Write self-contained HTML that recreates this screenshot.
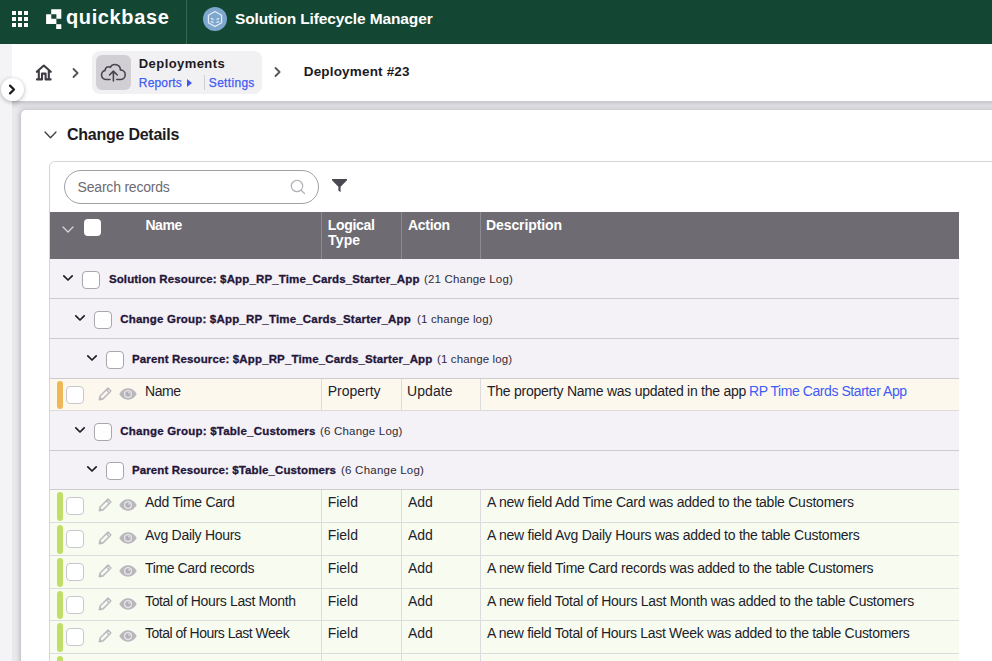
<!DOCTYPE html>
<html lang="en">
<head>
<meta charset="utf-8">
<title>Deployment #23 - Solution Lifecycle Manager</title>
<style>
*{box-sizing:border-box;margin:0;padding:0}
html,body{width:992px;height:661px;overflow:hidden}
body{position:relative;background:#e9e8eb;font-family:"Liberation Sans",sans-serif;color:#1c1b1f;font-size:14px;-webkit-font-smoothing:antialiased}
.abs{position:absolute}
.t{position:absolute;white-space:nowrap;line-height:1}
/* top bar */
#topbar{left:0;top:0;width:992px;height:44px;background:#144733}
#topdiv{left:186px;top:0;width:1px;height:44px;background:#3c6654}
/* sidebar strip */
#side{left:0;top:44px;width:12px;height:617px;background:#f4f3f6}
/* breadcrumb bar */
#crumb{left:12px;top:44px;width:980px;height:57px;background:#fff}
#crumbsh{left:12px;top:101px;width:980px;height:9px;background:linear-gradient(#c6c5c9,#dddce0 45%,#e9e8eb)}
#pill{left:92px;top:51px;width:170px;height:43px;background:#f1f0f3;border-radius:8px}
#ibox{left:96px;top:55px;width:35px;height:35px;background:#d1cfd4;border-radius:6px}
#expand{left:0.500px;top:78px;width:23px;height:23px;border-radius:50%;background:#fff;box-shadow:0 1px 4px rgba(0,0,0,.3)}
/* card */
#card{left:21px;top:110px;width:1000px;height:600px;background:#fff;border-radius:5px;box-shadow:-1px 0 5px rgba(50,48,58,.28)}
#inner{left:49px;top:161px;width:1000px;height:560px;background:#fff;border:1px solid #d6d5d9;border-radius:6px}
#search{left:64px;top:170px;width:255px;height:34px;border:1px solid #a19ea6;border-radius:17px;background:#fff}
/* table */
#thead{left:50px;top:212px;width:909px;height:47px;background:#6e6b73}
.vd{position:absolute;width:1px;background:#8d8a92}
.row{position:absolute;left:50px;width:909px}
.grp{background:#f4f2f7;border-bottom:1px solid #cdcbd1}
.dat{border-bottom:1px solid #dcdbdf}
.upd{background:#fcf8ee}
.add{background:#f8fcf0}
.cd{position:absolute;top:0;bottom:0;width:1px;background:#dcdbdf}
.cb{position:absolute;width:18px;height:18px;border:1px solid #a9a6ae;border-radius:4px;background:#fff}
.cbl{border-color:#c9c7cd}
.bar{position:absolute;left:6.500px;top:2px;width:6px;bottom:1px;border-radius:3px}
.g{font-weight:bold;font-size:11.500px;color:#24163a;-webkit-text-stroke:0.300px #24163a}
.gc{font-size:11.5px;color:#2f2a36}
.d{font-size:14px;color:#221d2b}
.h{font-size:14px;font-weight:bold;color:#fff}
.lnk{color:#3f5bf6}
#t_rep,#t_set{-webkit-text-stroke:0.250px #3f5bf6}
svg{position:absolute;overflow:visible}
</style>
</head>
<body>
<!-- top bar -->
<div class="abs" id="topbar"></div>
<div class="abs" id="topdiv"></div>
<svg id="gridic" style="left:12px;top:11px" width="16" height="16" viewBox="0 0 16 16" fill="#fff">
<rect x="0" y="0" width="4" height="4"/><rect x="6" y="0" width="4" height="4"/><rect x="12" y="0" width="4" height="4"/>
<rect x="0" y="6" width="4" height="4"/><rect x="6" y="6" width="4" height="4"/><rect x="12" y="6" width="4" height="4"/>
<rect x="0" y="12" width="4" height="4"/><rect x="6" y="12" width="4" height="4"/><rect x="12" y="12" width="4" height="4"/>
</svg>
<svg id="qblogo" style="left:46px;top:9px" width="16" height="20" viewBox="46 9 16 20" fill="#fff">
<path d="M51.200 9.200H61.300V18.800H56.400V14.200H51.200z"/><path d="M46.100 14.200H51.300V18.700H56.400V24H46.100z"/><rect x="56.200" y="24.200" width="5.100" height="4.800"/>
</svg>
<div class="t" id="t_qb" style="letter-spacing:0.625px;margin-left:-1.00px;left:67px;top:7px;font-size:20px;font-weight:bold;color:#fff">quickbase</div>
<svg id="appic" style="left:203px;top:7px" width="24" height="24" viewBox="0 0 24 24">
<circle cx="12" cy="12" r="12" fill="#7da7cc"/>
<path d="M12 4.500L18.600 8.200V15.800L12 19.500 5.400 15.800V8.200z" fill="none" stroke="#e6eef6" stroke-width="1.200" stroke-linejoin="round"/>
<path d="M7.800 11.300L10.600 12.500M7.800 14.300L10.600 15.500M16.200 11.300L13.400 12.500M16.200 14.300L13.400 15.500" stroke="#e3ecf4" stroke-width="1.300" fill="none"/>
</svg>
<div class="t" id="t_slm" style="letter-spacing:-0.120px;margin-left:0.00px;left:235px;top:11px;font-size:15.500px;font-weight:bold;color:#fff">Solution Lifecycle Manager</div>

<!-- sidebar + breadcrumb -->
<div class="abs" id="side"></div>
<div class="abs" id="crumb"></div>
<div class="abs" id="crumbsh"></div>
<div class="abs" id="pill"></div>
<div class="abs" id="ibox"></div>
<div class="abs" id="expand"></div>
<svg id="expchev" style="left:8px;top:84px" width="8" height="11" viewBox="0 0 8 11"><path d="M2 1.600L6 5.500 2 9.400" fill="none" stroke="#1c1b1f" stroke-width="2.200" stroke-linecap="round" stroke-linejoin="round"/></svg>
<svg id="homeic" style="left:35px;top:63px" width="18" height="19" viewBox="35 63 18 19"><path d="M36.800 71.800L43.800 65.500 50.800 71.800M38.800 70.400V79.400M48.800 70.400V79.400M37 79.400H42V73.600H45.600V79.400H50.600" fill="none" stroke="#3e3b44" stroke-width="2.100" stroke-linejoin="round" stroke-linecap="round"/></svg>
<svg id="chev1" style="left:72px;top:67.500px" width="8" height="10" viewBox="0 0 8 10"><path d="M1.500 1L5.600 5 1.500 9" fill="none" stroke="#55525a" stroke-width="1.800" stroke-linecap="round" stroke-linejoin="round"/></svg>
<svg id="cloudic" style="left:94px;top:53px" width="40" height="40" viewBox="94 53 40 40"><path d="M110 79.500H106.300A4.600 4.600 0 0 1 105.200 70.400 3.300 3.300 0 0 1 110.300 67.300 5.400 5.400 0 0 1 120.400 69.900 4.800 4.800 0 0 1 120.400 79.500H116.800M113.400 81V71.200M109.500 75L113.400 71.100 117.300 75" fill="none" stroke="#48454e" stroke-width="1.600" stroke-linecap="round" stroke-linejoin="round"/></svg>
<div class="t" id="t_dep" style="letter-spacing:0.420px;margin-left:-0.20px;left:139px;top:57px;font-size:13px;font-weight:bold;color:#1c1b1f">Deployments</div>
<div class="t lnk" id="t_rep" style="letter-spacing:0.167px;margin-left:-0.20px;left:139px;top:77px;font-size:12px">Reports</div>
<svg id="repcar" style="left:187px;top:79px" width="5" height="8" viewBox="0 0 5 8"><path d="M0 0L5 4 0 8z" fill="#3f5bf6"/></svg>
<div class="abs" style="left:204px;top:75px;width:1px;height:15px;background:#cfcdd3"></div>
<div class="t lnk" id="t_set" style="letter-spacing:0.314px;margin-left:-0.20px;left:209px;top:77px;font-size:12px">Settings</div>
<svg id="chev2" style="left:274px;top:67px" width="8" height="10" viewBox="0 0 8 10"><path d="M1.500 1L5.600 5 1.500 9" fill="none" stroke="#55525a" stroke-width="1.800" stroke-linecap="round" stroke-linejoin="round"/></svg>
<div class="t" id="t_d23" style="letter-spacing:0.177px;margin-left:-0.30px;left:304px;top:65px;font-size:13.500px;font-weight:bold;color:#1c1b1f">Deployment #23</div>

<!-- card -->
<div class="abs" id="card"></div>
<svg id="cdchev" style="left:44px;top:131px" width="13" height="8" viewBox="0 0 13 8"><path d="M1 1L6.500 6.800 12 1" fill="none" stroke="#3e3b44" stroke-width="1.300" stroke-linecap="round" stroke-linejoin="round"/></svg>
<div class="t" id="t_cd" style="letter-spacing:-0.247px;margin-left:0.00px;left:67px;top:127px;font-size:16px;font-weight:bold;color:#1c1b1f">Change Details</div>
<div class="abs" id="inner"></div>
<div class="abs" id="search"></div>
<div class="t" id="t_sr" style="letter-spacing:-0.207px;margin-left:-0.40px;left:78px;top:180px;font-size:14px;color:#6d6a72">Search records</div>
<svg id="magic" style="left:289.700px;top:179px" width="16" height="16" viewBox="0 0 16 16"><circle cx="7" cy="7" r="5.700" fill="none" stroke="#b3b1b7" stroke-width="1.200"/><path d="M11.200 11.200L14.500 14.500" stroke="#b3b1b7" stroke-width="1.300" stroke-linecap="round"/></svg>
<svg id="filtic" style="left:332px;top:179px" width="15" height="13" viewBox="0 0 15 13"><path d="M0 0H15V1.300L8.600 7.800V13L6.400 11.800V7.800L0 1.300z" fill="#4b4851"/></svg>

<!-- table header -->
<div class="abs" id="thead">
  <div class="vd" style="left:271px;top:0;height:47px"></div>
  <div class="vd" style="left:351px;top:0;height:47px"></div>
  <div class="vd" style="left:430px;top:0;height:47px"></div>
  <svg style="left:12px;top:14px" width="12" height="7" viewBox="0 0 12 7"><path d="M1 1L6 6 11 1" fill="none" stroke="#d8d6dc" stroke-width="1.300" stroke-linecap="round" stroke-linejoin="round"/></svg>
  <div class="abs" style="left:34px;top:7px;width:17px;height:17px;background:#fff;border-radius:4px"></div>
  <div class="t h" id="t_hn" style="letter-spacing:-0.399px;margin-left:0.40px;left:95px;top:6px">Name</div>
  <div class="t h" id="t_hl" style="letter-spacing:-0.317px;margin-left:-0.20px;left:278px;top:6px">Logical</div>
  <div class="t h" id="t_ht" style="letter-spacing:0.167px;margin-left:0.00px;left:278px;top:21px">Type</div>
  <div class="t h" id="t_ha" style="letter-spacing:-0.300px;margin-left:0.00px;left:358px;top:6px">Action</div>
  <div class="t h" id="t_hd" style="letter-spacing:-0.100px;margin-left:-1.00px;left:437px;top:6px">Description</div>
</div>

<!-- rows inserted below -->
<div class="row grp" style="top:259px;height:40px"><svg style="left:13.4px;top:16px" width="10" height="6" viewBox="0 0 10 6"><path d="M0.800 0.800L5 5 9.200 0.800" fill="none" stroke="#1f1d23" stroke-width="1.700" stroke-linecap="round" stroke-linejoin="round"/></svg><div class="cb" style="left:32.3px;top:12px"></div><div class="t g" id="t_g1" style="letter-spacing:0.137px;margin-left:0.40px;left:58.5px;top:14.500px">Solution Resource: $App_RP_Time_Cards_Starter_App</div><div class="t gc" id="t_g1c" style="letter-spacing:0.179px;margin-left:-0.50px;left:374.5px;top:15px">(21 Change Log)</div></div>
<div class="row grp" style="top:299px;height:40px"><svg style="left:25.4px;top:16px" width="10" height="6" viewBox="0 0 10 6"><path d="M0.800 0.800L5 5 9.200 0.800" fill="none" stroke="#1f1d23" stroke-width="1.700" stroke-linecap="round" stroke-linejoin="round"/></svg><div class="cb" style="left:44.3px;top:12px"></div><div class="t g" id="t_g2" style="letter-spacing:0.190px;margin-left:-0.20px;left:70.5px;top:14.500px">Change Group: $App_RP_Time_Cards_Starter_App</div><div class="t gc" id="t_g2c" style="letter-spacing:0.154px;margin-left:-0.50px;left:367.5px;top:15px">(1 change log)</div></div>
<div class="row grp" style="top:339px;height:40px"><svg style="left:37.4px;top:16px" width="10" height="6" viewBox="0 0 10 6"><path d="M0.800 0.800L5 5 9.200 0.800" fill="none" stroke="#1f1d23" stroke-width="1.700" stroke-linecap="round" stroke-linejoin="round"/></svg><div class="cb" style="left:56.3px;top:12px"></div><div class="t g" id="t_g3" style="letter-spacing:0.141px;margin-left:-0.50px;left:82.5px;top:14.500px">Parent Resource: $App_RP_Time_Cards_Starter_App</div><div class="t gc" id="t_g3c" style="letter-spacing:0.115px;margin-left:-1.00px;left:388px;top:15px">(1 change log)</div></div>
<div class="row grp" style="top:411px;height:40px"><svg style="left:25.4px;top:16px" width="10" height="6" viewBox="0 0 10 6"><path d="M0.800 0.800L5 5 9.200 0.800" fill="none" stroke="#1f1d23" stroke-width="1.700" stroke-linecap="round" stroke-linejoin="round"/></svg><div class="cb" style="left:44.3px;top:12px"></div><div class="t g" id="t_g4" style="letter-spacing:0.214px;margin-left:-0.20px;left:70.5px;top:14.500px">Change Group: $Table_Customers</div><div class="t gc" id="t_g4c" style="letter-spacing:0.192px;margin-left:-0.50px;left:270.5px;top:15px">(6 Change Log)</div></div>
<div class="row grp" style="top:451px;height:39px"><svg style="left:37.4px;top:15px" width="10" height="6" viewBox="0 0 10 6"><path d="M0.800 0.800L5 5 9.200 0.800" fill="none" stroke="#1f1d23" stroke-width="1.700" stroke-linecap="round" stroke-linejoin="round"/></svg><div class="cb" style="left:56.3px;top:11px"></div><div class="t g" id="t_g5" style="letter-spacing:0.109px;margin-left:-0.50px;left:82.5px;top:13.500px">Parent Resource: $Table_Customers</div><div class="t gc" id="t_g5c" style="letter-spacing:0.231px;margin-left:-1.00px;left:292px;top:14px">(6 Change Log)</div></div>
<div class="row dat upd" style="top:379px;height:32px"><div class="cd" style="left:271px"></div><div class="cd" style="left:351px"></div><div class="cd" style="left:430px"></div><div class="bar" style="background:#f0b757"></div><div class="cb cbl" style="left:15.500px;top:7px"></div><svg style="left:48px;top:8px" width="14" height="14" viewBox="0 0 14 14"><path d="M10 1.100L12.900 4 5 11.900 1.300 12.700 2.100 9z" fill="none" stroke="#bcbabf" stroke-width="1.500" stroke-linejoin="round"/><path d="M8.300 2.800L11.200 5.700" stroke="#bcbabf" stroke-width="1.300"/><path d="M1.300 12.700L2 9.400 4.600 12z" fill="#bcbabf"/></svg><svg style="left:69px;top:9px" width="18" height="12" viewBox="0 0 18 12"><path d="M0.300 6C2.400 2.200 5.400 0.300 9 0.300S15.600 2.200 17.700 6C15.600 9.800 12.600 11.700 9 11.700S2.400 9.800 0.300 6z" fill="#b9b7bd"/><circle cx="9" cy="6" r="4" fill="#e6e5e9"/><circle cx="9" cy="6" r="2.700" fill="#b3b1b7"/><circle cx="10.100" cy="4.800" r="0.900" fill="#e4e3e7"/></svg><div class="t d" id="t_d1n" style="letter-spacing:-0.399px;margin-left:-0.50px;left:95.500px;top:5px">Name</div><div class="t d" id="t_d1t" style="letter-spacing:-0.028px;margin-left:-0.20px;left:278px;top:5px">Property</div><div class="t d" id="t_d1a" style="letter-spacing:0.100px;margin-left:-1.00px;left:358px;top:5px">Update</div><div class="t d" id="t_d1d" style="letter-spacing:-0.256px;margin-left:0.00px;left:437px;top:5px">The property Name was updated in the app</div><div class="t d lnk" id="t_d1l" style="letter-spacing:-0.437px;margin-left:-1.50px;left:700.500px;top:5px">RP Time Cards Starter App</div></div>
<div class="row dat add" style="top:490px;height:33px"><div class="cd" style="left:271px"></div><div class="cd" style="left:351px"></div><div class="cd" style="left:430px"></div><div class="bar" style="background:#c0de68"></div><div class="cb cbl" style="left:15.500px;top:7px"></div><svg style="left:48px;top:8px" width="14" height="14" viewBox="0 0 14 14"><path d="M10 1.100L12.900 4 5 11.900 1.300 12.700 2.100 9z" fill="none" stroke="#bcbabf" stroke-width="1.500" stroke-linejoin="round"/><path d="M8.300 2.800L11.200 5.700" stroke="#bcbabf" stroke-width="1.300"/><path d="M1.300 12.700L2 9.400 4.600 12z" fill="#bcbabf"/></svg><svg style="left:69px;top:9px" width="18" height="12" viewBox="0 0 18 12"><path d="M0.300 6C2.400 2.200 5.400 0.300 9 0.300S15.600 2.200 17.700 6C15.600 9.800 12.600 11.700 9 11.700S2.400 9.800 0.300 6z" fill="#b9b7bd"/><circle cx="9" cy="6" r="4" fill="#e6e5e9"/><circle cx="9" cy="6" r="2.700" fill="#b3b1b7"/><circle cx="10.100" cy="4.800" r="0.900" fill="#e4e3e7"/></svg><div class="t d" id="t_d2n" style="letter-spacing:-0.292px;margin-left:-0.50px;left:95.500px;top:5px">Add Time Card</div><div class="t d" id="t_d2t" style="letter-spacing:-0.050px;margin-left:-0.20px;left:278px;top:5px">Field</div><div class="t d" id="t_d2a" style="letter-spacing:0.000px;margin-left:0.00px;left:358px;top:5px">Add</div><div class="t d" id="t_d2d" style="letter-spacing:-0.237px;margin-left:0.00px;left:437px;top:5px">A new field Add Time Card was added to the table Customers</div></div>
<div class="row dat add" style="top:523px;height:33px"><div class="cd" style="left:271px"></div><div class="cd" style="left:351px"></div><div class="cd" style="left:430px"></div><div class="bar" style="background:#c0de68"></div><div class="cb cbl" style="left:15.500px;top:7px"></div><svg style="left:48px;top:8px" width="14" height="14" viewBox="0 0 14 14"><path d="M10 1.100L12.900 4 5 11.900 1.300 12.700 2.100 9z" fill="none" stroke="#bcbabf" stroke-width="1.500" stroke-linejoin="round"/><path d="M8.300 2.800L11.200 5.700" stroke="#bcbabf" stroke-width="1.300"/><path d="M1.300 12.700L2 9.400 4.600 12z" fill="#bcbabf"/></svg><svg style="left:69px;top:9px" width="18" height="12" viewBox="0 0 18 12"><path d="M0.300 6C2.400 2.200 5.400 0.300 9 0.300S15.600 2.200 17.700 6C15.600 9.800 12.600 11.700 9 11.700S2.400 9.800 0.300 6z" fill="#b9b7bd"/><circle cx="9" cy="6" r="4" fill="#e6e5e9"/><circle cx="9" cy="6" r="2.700" fill="#b3b1b7"/><circle cx="10.100" cy="4.800" r="0.900" fill="#e4e3e7"/></svg><div class="t d" id="t_d3n" style="letter-spacing:-0.286px;margin-left:-0.50px;left:95.500px;top:5px">Avg Daily Hours</div><div class="t d" id="t_d3t" style="letter-spacing:-0.050px;margin-left:-0.20px;left:278px;top:5px">Field</div><div class="t d" id="t_d3a" style="letter-spacing:0.000px;margin-left:0.00px;left:358px;top:5px">Add</div><div class="t d" id="t_d3d" style="letter-spacing:-0.246px;margin-left:0.00px;left:437px;top:5px">A new field Avg Daily Hours was added to the table Customers</div></div>
<div class="row dat add" style="top:556px;height:33px"><div class="cd" style="left:271px"></div><div class="cd" style="left:351px"></div><div class="cd" style="left:430px"></div><div class="bar" style="background:#c0de68"></div><div class="cb cbl" style="left:15.500px;top:7px"></div><svg style="left:48px;top:8px" width="14" height="14" viewBox="0 0 14 14"><path d="M10 1.100L12.900 4 5 11.900 1.300 12.700 2.100 9z" fill="none" stroke="#bcbabf" stroke-width="1.500" stroke-linejoin="round"/><path d="M8.300 2.800L11.200 5.700" stroke="#bcbabf" stroke-width="1.300"/><path d="M1.300 12.700L2 9.400 4.600 12z" fill="#bcbabf"/></svg><svg style="left:69px;top:9px" width="18" height="12" viewBox="0 0 18 12"><path d="M0.300 6C2.400 2.200 5.400 0.300 9 0.300S15.600 2.200 17.700 6C15.600 9.800 12.600 11.700 9 11.700S2.400 9.800 0.300 6z" fill="#b9b7bd"/><circle cx="9" cy="6" r="4" fill="#e6e5e9"/><circle cx="9" cy="6" r="2.700" fill="#b3b1b7"/><circle cx="10.100" cy="4.800" r="0.900" fill="#e4e3e7"/></svg><div class="t d" id="t_d4n" style="letter-spacing:-0.375px;margin-left:-0.50px;left:95.500px;top:5px">Time Card records</div><div class="t d" id="t_d4t" style="letter-spacing:-0.050px;margin-left:-0.20px;left:278px;top:5px">Field</div><div class="t d" id="t_d4a" style="letter-spacing:0.000px;margin-left:0.00px;left:358px;top:5px">Add</div><div class="t d" id="t_d4d" style="letter-spacing:-0.270px;margin-left:0.00px;left:437px;top:5px">A new field Time Card records was added to the table Customers</div></div>
<div class="row dat add" style="top:589px;height:32px"><div class="cd" style="left:271px"></div><div class="cd" style="left:351px"></div><div class="cd" style="left:430px"></div><div class="bar" style="background:#c0de68"></div><div class="cb cbl" style="left:15.500px;top:7px"></div><svg style="left:48px;top:8px" width="14" height="14" viewBox="0 0 14 14"><path d="M10 1.100L12.900 4 5 11.900 1.300 12.700 2.100 9z" fill="none" stroke="#bcbabf" stroke-width="1.500" stroke-linejoin="round"/><path d="M8.300 2.800L11.200 5.700" stroke="#bcbabf" stroke-width="1.300"/><path d="M1.300 12.700L2 9.400 4.600 12z" fill="#bcbabf"/></svg><svg style="left:69px;top:9px" width="18" height="12" viewBox="0 0 18 12"><path d="M0.300 6C2.400 2.200 5.400 0.300 9 0.300S15.600 2.200 17.700 6C15.600 9.800 12.600 11.700 9 11.700S2.400 9.800 0.300 6z" fill="#b9b7bd"/><circle cx="9" cy="6" r="4" fill="#e6e5e9"/><circle cx="9" cy="6" r="2.700" fill="#b3b1b7"/><circle cx="10.100" cy="4.800" r="0.900" fill="#e4e3e7"/></svg><div class="t d" id="t_d5n" style="letter-spacing:-0.354px;margin-left:-0.50px;left:95.500px;top:5px">Total of Hours Last Month</div><div class="t d" id="t_d5t" style="letter-spacing:-0.050px;margin-left:-0.20px;left:278px;top:5px">Field</div><div class="t d" id="t_d5a" style="letter-spacing:0.000px;margin-left:0.00px;left:358px;top:5px">Add</div><div class="t d" id="t_d5d" style="letter-spacing:-0.290px;margin-left:0.00px;left:437px;top:5px">A new field Total of Hours Last Month was added to the table Customers</div></div>
<div class="row dat add" style="top:621px;height:33px"><div class="cd" style="left:271px"></div><div class="cd" style="left:351px"></div><div class="cd" style="left:430px"></div><div class="bar" style="background:#c0de68"></div><div class="cb cbl" style="left:15.500px;top:7px"></div><svg style="left:48px;top:8px" width="14" height="14" viewBox="0 0 14 14"><path d="M10 1.100L12.900 4 5 11.900 1.300 12.700 2.100 9z" fill="none" stroke="#bcbabf" stroke-width="1.500" stroke-linejoin="round"/><path d="M8.300 2.800L11.200 5.700" stroke="#bcbabf" stroke-width="1.300"/><path d="M1.300 12.700L2 9.400 4.600 12z" fill="#bcbabf"/></svg><svg style="left:69px;top:9px" width="18" height="12" viewBox="0 0 18 12"><path d="M0.300 6C2.400 2.200 5.400 0.300 9 0.300S15.600 2.200 17.700 6C15.600 9.800 12.600 11.700 9 11.700S2.400 9.800 0.300 6z" fill="#b9b7bd"/><circle cx="9" cy="6" r="4" fill="#e6e5e9"/><circle cx="9" cy="6" r="2.700" fill="#b3b1b7"/><circle cx="10.100" cy="4.800" r="0.900" fill="#e4e3e7"/></svg><div class="t d" id="t_d6n" style="letter-spacing:-0.500px;margin-left:-0.50px;left:95.500px;top:5px">Total of Hours Last Week</div><div class="t d" id="t_d6t" style="letter-spacing:-0.050px;margin-left:-0.20px;left:278px;top:5px">Field</div><div class="t d" id="t_d6a" style="letter-spacing:0.000px;margin-left:0.00px;left:358px;top:5px">Add</div><div class="t d" id="t_d6d" style="letter-spacing:-0.309px;margin-left:0.00px;left:437px;top:5px">A new field Total of Hours Last Week was added to the table Customers</div></div>
<div class="row dat add" style="top:654px;height:33px"><div class="cd" style="left:271px"></div><div class="cd" style="left:351px"></div><div class="cd" style="left:430px"></div><div class="bar" style="background:#c0de68"></div><div class="cb cbl" style="left:15.500px;top:7px"></div><svg style="left:48px;top:8px" width="14" height="14" viewBox="0 0 14 14"><path d="M10 1.100L12.900 4 5 11.900 1.300 12.700 2.100 9z" fill="none" stroke="#bcbabf" stroke-width="1.500" stroke-linejoin="round"/><path d="M8.300 2.800L11.200 5.700" stroke="#bcbabf" stroke-width="1.300"/><path d="M1.300 12.700L2 9.400 4.600 12z" fill="#bcbabf"/></svg><svg style="left:69px;top:9px" width="18" height="12" viewBox="0 0 18 12"><path d="M0.300 6C2.400 2.200 5.400 0.300 9 0.300S15.600 2.200 17.700 6C15.600 9.800 12.600 11.700 9 11.700S2.400 9.800 0.300 6z" fill="#b9b7bd"/><circle cx="9" cy="6" r="4" fill="#e6e5e9"/><circle cx="9" cy="6" r="2.700" fill="#b3b1b7"/><circle cx="10.100" cy="4.800" r="0.900" fill="#e4e3e7"/></svg><div class="t d" id="t_d7n" style="left:95.500px;top:7px">Avg Hours per Week</div><div class="t d" id="t_d7t" style="left:278px;top:7px">Field</div><div class="t d" id="t_d7a" style="left:358px;top:7px">Add</div><div class="t d" id="t_d7d" style="left:437px;top:7px">A new field Avg Hours per Week was added to the table Customers</div></div>
</body>
</html>
